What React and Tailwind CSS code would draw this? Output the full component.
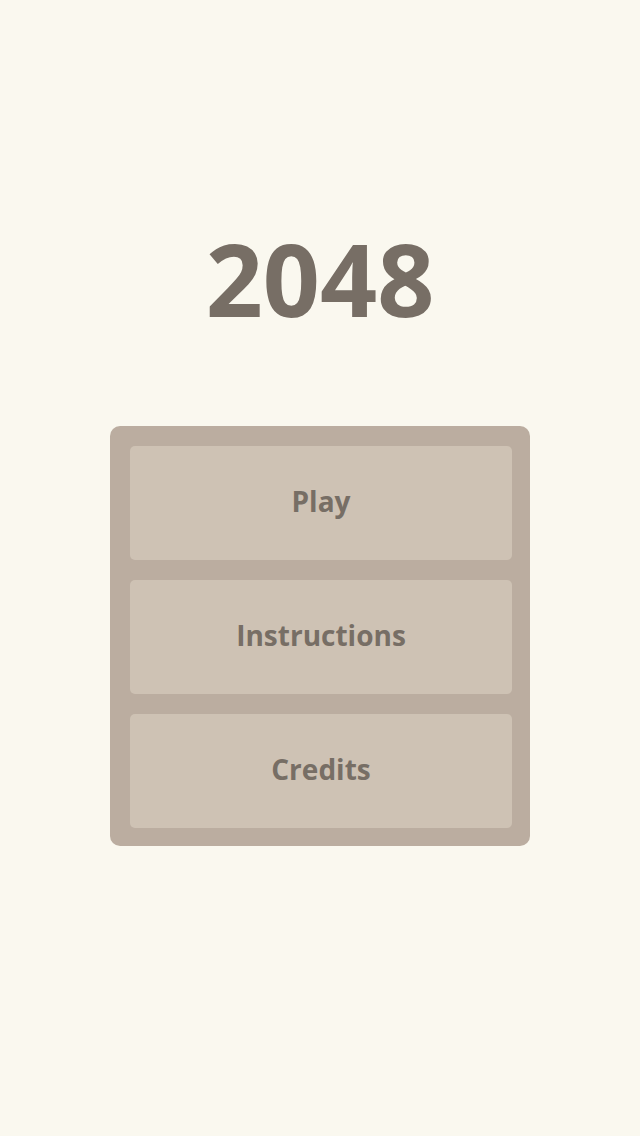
import React from 'react';

const items = ['Play', 'Instructions', 'Credits'];

export default function App() {
  return (
    <div
      className="w-[640px] h-[1136px] bg-[#faf8ef] flex flex-col items-center"
      style={{ fontFamily: '"Open Sans", "Noto Sans", sans-serif' }}
    >
      <h1 className="mt-[228px] h-[100px] text-[100px] leading-none font-bold text-[#776e65]">
        2048
      </h1>
      <div className="mt-[98px] w-[420px] bg-[#bbada0] rounded-[10px] pt-5 pb-[18px] pl-5 pr-[18px] flex flex-col gap-5">
        {items.map((label) => (
          <button
            key={label}
            className="h-[114px] w-full bg-[#cec2b4] rounded-[5px] flex items-center justify-center pb-1 text-[28px] font-bold text-[#776e65]"
          >
            {label}
          </button>
        ))}
      </div>
    </div>
  );
}
